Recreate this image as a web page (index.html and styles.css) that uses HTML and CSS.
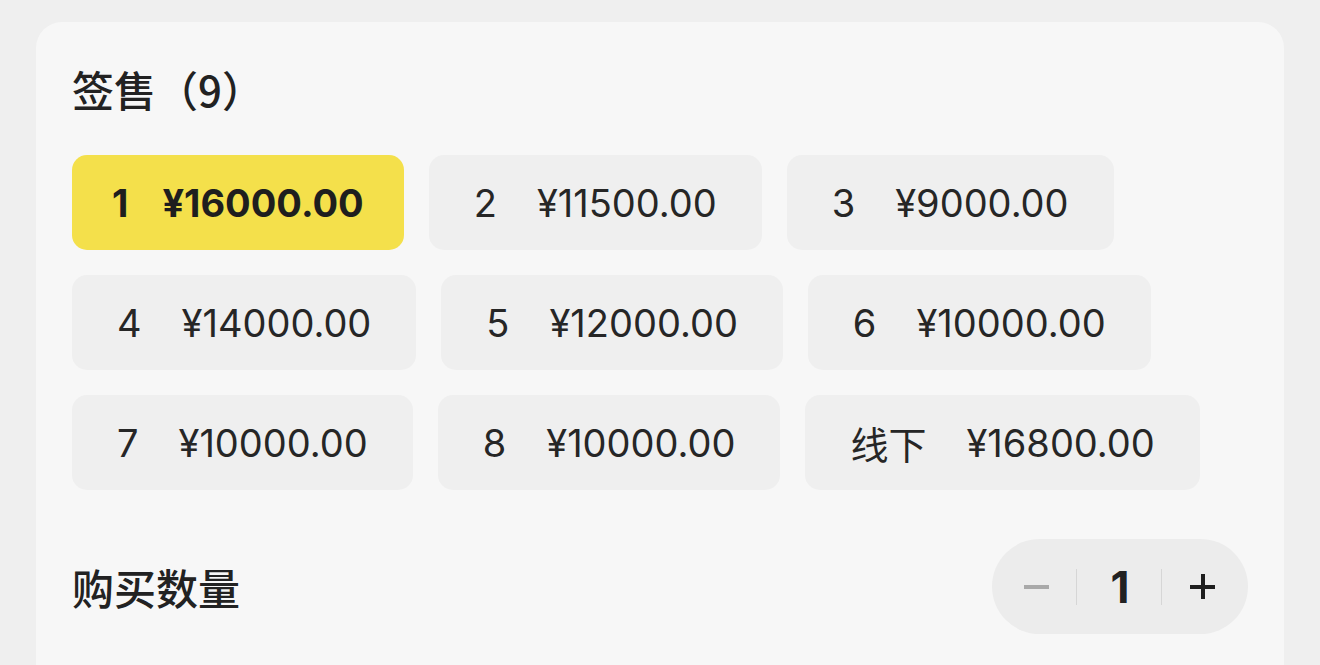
FILE: index.html
```html
<!DOCTYPE html>
<html lang="zh-CN">
<head>
  <meta charset="UTF-8" />
  <meta name="viewport" content="width=device-width, initial-scale=1.0"/>
  <title>签售</title>
  <link rel="stylesheet" href="styles.css">
</head>
<body>

  <div class="card">
    <h2 class="title">签售（9）</h2>

    <div class="chips">
      <div class="chip active"><span class="num">1</span><span>¥16000.00</span></div>
      <div class="chip"><span class="num">2</span><span>¥11500.00</span></div>
      <div class="chip"><span class="num">3</span><span>¥9000.00</span></div>
      <div class="chip"><span class="num">4</span><span>¥14000.00</span></div>
      <div class="chip"><span class="num">5</span><span>¥12000.00</span></div>
      <div class="chip"><span class="num">6</span><span>¥10000.00</span></div>
      <div class="chip"><span class="num">7</span><span>¥10000.00</span></div>
      <div class="chip"><span class="num">8</span><span>¥10000.00</span></div>
      <div class="chip"><span class="num">线下</span><span>¥16800.00</span></div>
    </div>

    <div class="qty-row">
      <div class="qty-label">购买数量</div>
      <div class="stepper">
        <span class="step minus"></span>
        <span class="sep"></span>
        <span class="count">1</span>
        <span class="sep"></span>
        <span class="step plus"></span>
      </div>
    </div>
  </div>

</body>
</html>
```

FILE: styles.css
```css
body {
  margin: 0;
  background: #efefef;
  font-family: Inter, "Noto Sans CJK SC", sans-serif;
  color: #222;
  padding: 22px 36px 0;
  overflow: hidden;
}

.card {
  background: #f7f7f7;
  border-radius: 26px;
  padding: 43px 36px 60px;
  height: 700px;
  box-sizing: border-box;
}

.title {
  margin: 0 0 42px;
  font-size: 42px;
  line-height: 48px;
  font-weight: 500;
  font-family: "Noto Sans CJK SC", sans-serif;
}

.chips {
  display: flex;
  flex-wrap: wrap;
  gap: 25px;
  max-width: 1140px;
}

.chip {
  height: 95px;
  display: flex;
  align-items: center;
  padding: 0 45px;
  background: #efefef;
  border-radius: 15px;
  font-size: 38px;
  font-weight: 400;
  color: #262626;
}

.chip .num {
  margin-right: 40px;
}

.chip.active {
  background: #f4e04b;
  font-weight: 700;
  padding: 0 40px;
  color: #1e1e1e;
}

.chip.active .num {
  margin-right: 34px;
}

.qty-row {
  display: flex;
  justify-content: space-between;
  align-items: center;
  margin-top: 49px;
}

.qty-label {
  font-size: 42px;
  font-weight: 500;
  font-family: "Noto Sans CJK SC", sans-serif;
}

.stepper {
  display: flex;
  align-items: center;
  height: 95px;
  padding: 0 33px 0 32px;
  background: #ececec;
  border-radius: 48px;
}

.step {
  position: relative;
  width: 25px;
  height: 25px;
}

.step::before,
.step::after {
  content: "";
  position: absolute;
  background: currentColor;
}

.step::before {
  left: 0;
  right: 0;
  top: 11px;
  height: 4px;
}

.minus {
  color: #a9a9a9;
}

.minus::after {
  display: none;
}

.plus {
  color: #1e1e1e;
}

.plus::after {
  top: 0;
  bottom: 0;
  left: 11px;
  width: 4px;
}

.sep {
  width: 1px;
  height: 36px;
  margin: 0 28px 0 27px;
  background: #d6d6d6;
}

.count {
  width: 84px;
  margin: 0 -28px 0 -27px;
  text-align: center;
  font-size: 44px;
  font-weight: 700;
}
```
